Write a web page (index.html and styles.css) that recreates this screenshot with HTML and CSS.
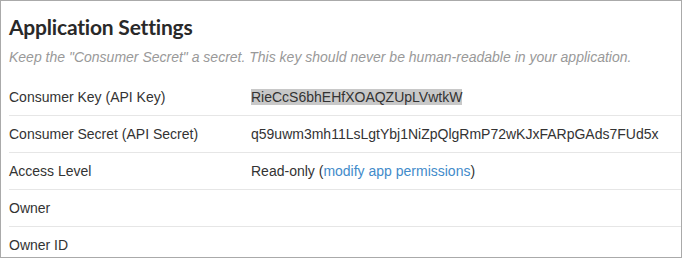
FILE: index.html
```html
<!DOCTYPE html>
<html>
<head>
<meta charset="utf-8">
<link rel="stylesheet" href="styles.css">
</head>
<body>
<div class="panel">
  <h2 class="title">Application Settings</h2>
  <p class="note">Keep the "Consumer Secret" a secret. This key should never be human-readable in your application.</p>
  <table class="settings">
    <tr><td class="label">Consumer Key (API Key)</td><td class="value"><span class="selected">RieCcS6bhEHfXOAQZUpLVwtkW</span></td></tr>
    <tr><td class="label">Consumer Secret (API Secret)</td><td class="value">q59uwm3mh11LsLgtYbj1NiZpQlgRmP72wKJxFARpGAds7FUd5x</td></tr>
    <tr><td class="label">Access Level</td><td class="value">Read-only (<a class="link" href="#">modify app permissions</a>)</td></tr>
    <tr><td class="label">Owner</td><td class="value"></td></tr>
    <tr><td class="label">Owner ID</td><td class="value"></td></tr>
  </table>
</div>
</body>
</html>
```

FILE: styles.css
```css
html, body {
  margin: 0;
  padding: 0;
  background: #fff;
}
.panel {
  width: 672px;
  height: 256px;
  border: 1px solid #aaa;
  padding: 0 0 0 8px;
  overflow: hidden;
  font-family: "Liberation Sans", Arial, sans-serif;
  font-size: 14px;
  color: #333;
}
.title {
  font-family: "Lato", "Liberation Sans", sans-serif;
  font-weight: 700;
  font-size: 21px;
  letter-spacing: -0.2px;
  line-height: 26px;
  margin: 13px 0 0 0;
  color: #292929;
}
.note {
  margin: 7px 0 0 0;
  font-style: italic;
  color: #999;
  line-height: 20px;
}
.settings {
  border-collapse: collapse;
  width: 100%;
  margin-top: 12px;
}
.settings td {
  padding: 8px 0;
  line-height: 20px;
  border-bottom: 1px solid #e6e6e6;
  vertical-align: top;
}
.label {
  width: 242px;
}
.selected {
  background: #c8c8c8;
}
.link {
  color: #428bca;
  text-decoration: none;
}
```
